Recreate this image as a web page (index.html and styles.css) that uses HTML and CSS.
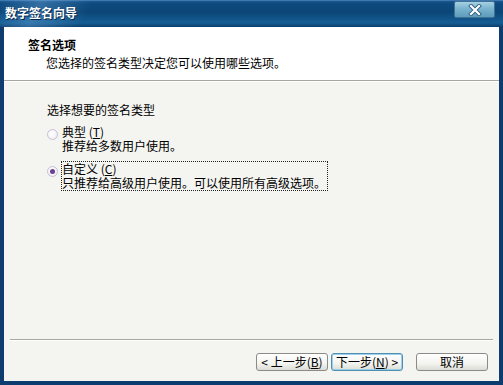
FILE: index.html
```html
<!DOCTYPE html>
<html>
<head>
<meta charset="utf-8">
<title>数字签名向导</title>
<link rel="stylesheet" href="styles.css">
</head>
<body>
    <div class="window">
        <div class="titlebar">
            <span class="title">数字签名向导</span>
            <span class="close-btn">
                <svg width="14" height="12" viewBox="0 0 14 12">
                    <path d="M3 2 L11 10 M11 2 L3 10" stroke="#2f5f86" stroke-width="4" stroke-linecap="square"/>
                    <path d="M3 2 L11 10 M11 2 L3 10" stroke="#ffffff" stroke-width="2.2" stroke-linecap="square"/>
                </svg>
            </span>
        </div>
        <div class="client">
            <div class="header">
                <div class="header-title">签名选项</div>
                <div class="header-sub">您选择的签名类型决定您可以使用哪些选项。</div>
            </div>
            <div class="rule"></div>
            <div class="body">
                <div class="prompt">选择想要的签名类型</div>
                <div class="option">
                    <span class="radio"></span>
                    <div class="label">典型 (<u>T</u>)<br>推荐给多数用户使用。</div>
                </div>
                <div class="option">
                    <span class="radio checked"></span>
                    <div class="label focused">自定义 (<u>C</u>)<br>只推荐给高级用户使用。可以使用所有高级选项。</div>
                </div>
            </div>
            <div class="footer">
                <div class="rule footer-rule"></div>
                <div class="buttons">
                    <button class="xp-button">&lt; 上一步(<u>B</u>)</button>
                    <button class="xp-button default">下一步(<u>N</u>) &gt;</button>
                    <button class="xp-button cancel">取消</button>
                </div>
            </div>
        </div>
    </div>
</body>
</html>
```

FILE: styles.css
```css
body {
    margin: 0;
    font-family: "Noto Sans CJK SC", "Liberation Sans", sans-serif;
    font-size: 12px;
    color: #000;
}
.window {
    width: 503px;
    height: 385px;
    display: flex;
    flex-direction: column;
    background: #0d3c6e;
}
.titlebar {
    height: 27px;
    display: flex;
    align-items: flex-start;
    justify-content: space-between;
    background:
        linear-gradient(115deg, rgba(120, 180, 230, 0) 0%, rgba(120, 180, 230, 0.35) 8%, rgba(120, 180, 230, 0) 18%),
        linear-gradient(to bottom, #5e94c8 0px, #1d5a92 1px, #0f4a80 3px, #0c4677 45%, #145d94 85%, #0b3e6c 100%);
}
.title {
    color: #fff;
    font-weight: bold;
    line-height: 14px;
    margin: 6px 0 0 5px;
    text-shadow: 1px 1px 0 #08264a;
}
.close-btn {
    width: 39px;
    height: 15px;
    margin: 1px 8px 0 0;
    display: flex;
    align-items: center;
    justify-content: center;
    border: 1px solid #3f7196;
    border-radius: 2px;
    background: linear-gradient(to bottom, #a6d0e2 0%, #79b3cd 45%, #5e9cbb 100%);
}
.client {
    flex: 1;
    display: flex;
    flex-direction: column;
    margin: 0 4px 4px 4px;
    background: #f4f4f0;
}
.header {
    height: 53px;
    background: #fff;
    padding: 11px 0 0 24px;
    box-sizing: border-box;
    line-height: 14px;
}
.header-title {
    font-weight: bold;
}
.header-sub {
    margin: 4px 0 0 18px;
}
.rule {
    border-top: 1px solid #a7a7a2;
    border-bottom: 1px solid #fff;
}
.body {
    flex: 1;
    padding: 21px 0 0 43px;
    line-height: 14px;
}
.prompt {
    margin-bottom: 7px;
}
.option {
    display: flex;
    align-items: flex-start;
    margin-bottom: 7px;
}
.radio {
    width: 11px;
    height: 11px;
    box-sizing: border-box;
    border-radius: 50%;
    border: 1px solid #c9bfd8;
    background: radial-gradient(circle at 40% 40%, #ffffff 0%, #ece9f0 100%);
    margin: 5px 3px 0 0;
    display: flex;
    align-items: center;
    justify-content: center;
}
.radio.checked::after {
    content: "";
    width: 5px;
    height: 5px;
    border-radius: 50%;
    background: #6b3f93;
}
.label {
    border: 1px dotted transparent;
    padding-right: 1px;
}
.label.focused {
    border-color: #222;
}
.footer {
    height: 42px;
    padding: 0 6px;
}
.buttons {
    display: flex;
    justify-content: flex-end;
    margin-top: 12px;
    padding-right: 5px;
}
.xp-button {
    width: 72px;
    height: 18px;
    padding: 0;
    font-family: "Noto Sans CJK SC", "Liberation Sans", sans-serif;
    font-size: 12px;
    line-height: 14px;
    color: #000;
    border: 1px solid #8a8a86;
    border-radius: 3px;
    background: linear-gradient(to bottom, #ffffff 0%, #f3f3ef 60%, #dcdcd6 100%);
    margin-left: 3px;
}
.xp-button.default {
    border-color: #4f8fb4;
    box-shadow: inset 0 0 0 1px #9cd0e8;
}
.xp-button.cancel {
    margin-left: 13px;
}
```
